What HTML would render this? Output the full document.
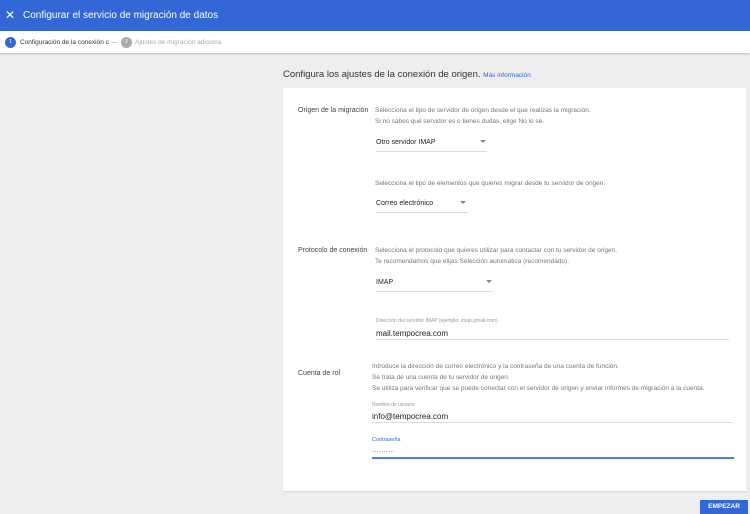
<!DOCTYPE html>
<html><head><meta charset="utf-8"><style>
*{margin:0;padding:0;box-sizing:border-box}
body{width:750px;height:512px;overflow:hidden;background:#eeeeee;font-family:"Liberation Sans",sans-serif;position:relative}
.a{position:absolute;white-space:nowrap}
.hd{left:0;top:0;width:750px;height:31px;background:#3367d6}
.st{left:0;top:31px;width:750px;height:22px;background:#fff;box-shadow:0 1px 2px rgba(0,0,0,.2)}
.card{left:283px;top:88px;width:463px;height:403px;background:#fff;box-shadow:0 1px 1px rgba(0,0,0,.1)}
.lab{font-size:7px;color:#444}
.d{font-size:6.5px;color:#777}
.v{font-size:7px;color:#222}
.ln{height:1px;background:#ddd}
.ar{width:0;height:0;border-left:3px solid transparent;border-right:3px solid transparent;border-top:3px solid #888}
.sm{font-size:5px;color:#999}
.big{font-size:8px;color:#222}
</style></head><body>
<div class="a hd"></div>
<div class="a" style="left:5px;top:8px;color:#fff;font-size:12px">✕</div>
<div class="a" style="left:23px;top:10px;color:#fff;font-size:10px">Configurar el servicio de migración de datos</div>
<div class="a st"></div>
<div class="a" style="left:5px;top:37px;width:11px;height:11px;border-radius:50%;background:#3367d6;color:#fff;font-size:5px;text-align:center;line-height:11px">1</div>
<div class="a" style="left:20px;top:39px;font-size:6.5px;color:#333">Configuración de la conexión c</div>
<div class="a" style="left:111px;top:42px;width:6px;height:1px;background:#ccc"></div>
<div class="a" style="left:121px;top:37px;width:11px;height:11px;border-radius:50%;background:#aaa;color:#fff;font-size:5px;text-align:center;line-height:11px">2</div>
<div class="a" style="left:135px;top:39px;font-size:6.5px;color:#aaa">Ajustes de migración adiciona</div>
<div class="a" style="left:283px;top:69px;font-size:9.5px;color:#333">Configura los ajustes de la conexión de origen. <span style="font-size:6.5px;color:#3367d6">Más información</span></div>
<div class="a card"></div>
<div class="a lab" style="left:298px;top:107px">Origen de la migración</div>
<div class="a d" style="left:375px;top:107px">Selecciona el tipo de servidor de origen desde el que realizas la migración.</div>
<div class="a d" style="left:375px;top:118px">Si no sabes qué servidor es o tienes dudas, elige No lo sé.</div>
<div class="a v" style="left:376px;top:139px">Otro servidor IMAP</div>
<div class="a ar" style="left:480px;top:140px"></div>
<div class="a ln" style="left:376px;top:151px;width:111px"></div>
<div class="a d" style="left:375px;top:180px">Selecciona el tipo de elementos que quieres migrar desde tu servidor de origen.</div>
<div class="a v" style="left:376px;top:200px">Correo electrónico</div>
<div class="a ar" style="left:460px;top:201px"></div>
<div class="a ln" style="left:376px;top:212px;width:92px"></div>
<div class="a lab" style="left:298px;top:247px">Protocolo de conexión</div>
<div class="a d" style="left:375px;top:247px">Selecciona el protocolo que quieres utilizar para contactar con tu servidor de origen.</div>
<div class="a d" style="left:375px;top:258px">Te recomendamos que elijas Selección automática (recomendado).</div>
<div class="a v" style="left:376px;top:279px">IMAP</div>
<div class="a ar" style="left:486px;top:280px"></div>
<div class="a ln" style="left:376px;top:291px;width:117px"></div>
<div class="a sm" style="left:376px;top:318px">Dirección del servidor IMAP (ejemplo: imap.gmail.com)</div>
<div class="a big" style="left:376px;top:329px">mail.tempocrea.com</div>
<div class="a ln" style="left:376px;top:339px;width:353px"></div>
<div class="a lab" style="left:298px;top:370px">Cuenta de rol</div>
<div class="a d" style="left:372px;top:363px">Introduce la dirección de correo electrónico y la contraseña de una cuenta de función.</div>
<div class="a d" style="left:372px;top:374px">Se trata de una cuenta de tu servidor de origen.</div>
<div class="a d" style="left:372px;top:385px">Se utiliza para verificar que se puede conectar con el servidor de origen y enviar informes de migración a la cuenta.</div>
<div class="a sm" style="left:372px;top:402px">Nombre de usuario</div>
<div class="a big" style="left:372px;top:412px">info@tempocrea.com</div>
<div class="a ln" style="left:372px;top:422px;width:361px"></div>
<div class="a" style="left:372px;top:437px;font-size:5.5px;color:#3367d6">Contraseña</div>
<div class="a" style="left:372px;top:449px;font-size:6px;color:#333;letter-spacing:0.3px">··········</div>
<div class="a" style="left:372px;top:457px;width:362px;height:1.5px;background:#4f7fe6"></div>
<div class="a" style="left:700px;top:500px;width:48px;height:14px;background:#3367d6;color:#fff;font-size:6.5px;font-weight:bold;text-align:center;line-height:14px">EMPEZAR</div>
</body></html>
